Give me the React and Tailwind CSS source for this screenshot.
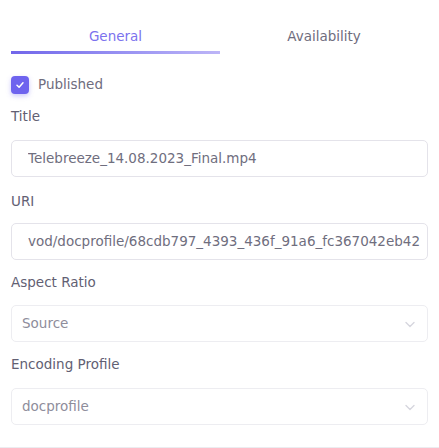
import React from 'react';

const Chevron = () => (
  <svg width="14" height="14" viewBox="0 0 14 14" fill="none" className="text-[#d6d6de]">
    <path d="M3 5.5 7 9.5l4-4" stroke="currentColor" strokeWidth="1.4" strokeLinecap="round" strokeLinejoin="round" />
  </svg>
);

const Label = ({ children, className = '' }) => (
  <div className={`text-[13.5px] text-[#626073] leading-none ${className}`}>{children}</div>
);

const TextInput = ({ value }) => (
  <div className="h-[37px] border border-[#e4e3ea] rounded-[5px] flex items-center pl-[16px] pr-[7px]">
    <div className="overflow-hidden flex-1">
      <div className="text-[13.5px] text-[#6f6e7e] whitespace-nowrap">{value}</div>
    </div>
  </div>
);

const Select = ({ value }) => (
  <div className="h-[37px] border border-[#ededf1] rounded-[5px] flex items-center justify-between pl-[10px] pr-[10px]">
    <span className="text-[13.5px] text-[#8e8d9b]">{value}</span>
    <Chevron />
  </div>
);

export default function App() {
  return (
    <div className="w-[439px] h-[448px] bg-white flex flex-col" style={{ fontFamily: '"DejaVu Sans", "Noto Sans", sans-serif' }}>
      {/* tabs */}
      <div className="flex pt-[29px] px-[11px]">
        <div className="w-[209px] flex flex-col items-center">
          <span className="text-[13.5px] text-[#7c72ee] leading-[14px]">General</span>
          <div className="mt-[8px] h-[3px] w-full bg-gradient-to-r from-[#7266ea] to-[#bdb5f7]"></div>
        </div>
        <div className="flex-1 flex justify-center">
          <span className="text-[13.5px] text-[#6f6d7e] leading-[14px]">Availability</span>
        </div>
      </div>

      <div className="px-[11px] pt-[22px] flex flex-col flex-1">
        <div className="flex items-center gap-[9px] h-[18px]">
          <div className="w-[18px] h-[18px] rounded-[4px] bg-[#6e63ee] shadow-[0_2px_5px_rgba(110,99,238,0.35)] flex items-center justify-center">
            <svg width="10" height="10" viewBox="0 0 10 10" fill="none">
              <path d="M2 5.2 4.1 7.2 8 2.8" stroke="white" strokeWidth="1.5" strokeLinecap="round" strokeLinejoin="round" />
            </svg>
          </div>
          <span className="text-[13.5px] text-[#6f6d7e] leading-none">Published</span>
        </div>

        <Label className="mt-[16px] h-[14px]">Title</Label>
        <div className="mt-[16px]"><TextInput value="Telebreeze_14.08.2023_Final.mp4" /></div>

        <Label className="mt-[18px] h-[14px]">URI</Label>
        <div className="mt-[14px]"><TextInput value="vod/docprofile/68cdb797_4393_436f_91a6_fc367042eb42" /></div>

        <Label className="mt-[16px] h-[14px]">Aspect Ratio</Label>
        <div className="mt-[15px]"><Select value="Source" /></div>

        <Label className="mt-[16px] h-[14px]">Encoding Profile</Label>
        <div className="mt-[16px]"><Select value="docprofile" /></div>

        <div className="flex-1"></div>
      </div>
      <div className="h-px bg-[#ececf0]"></div>
    </div>
  );
}
